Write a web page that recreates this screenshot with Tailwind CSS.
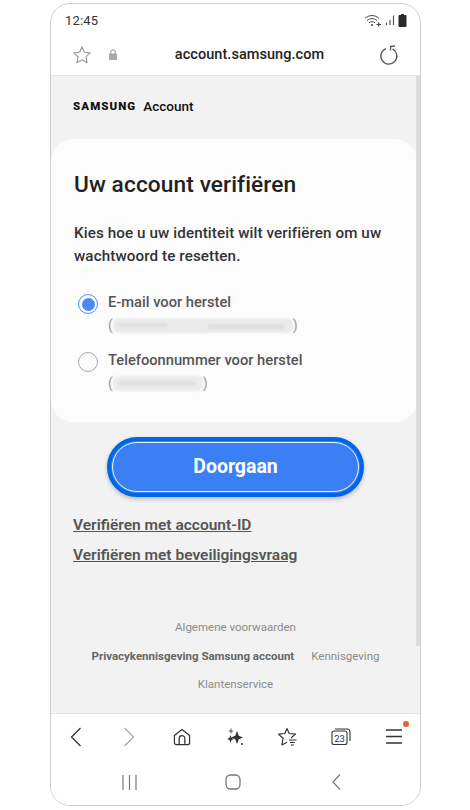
<!DOCTYPE html>
<html lang="en">
<head>
<meta charset="UTF-8">
<title>Samsung Account</title>
<script src="https://cdn.jsdelivr.net/npm/@tailwindcss/browser@4"></script>
</head>
<body class="bg-white w-[470px] h-[810px] overflow-hidden font-['Roboto',sans-serif]">
  <div class="ml-[50px] mt-[3px] w-[371px] h-[803px] border border-[#cfcfcf] rounded-[20px] overflow-hidden flex flex-col bg-white">
    <!-- status bar -->
    <div class="h-[31px] shrink-0 flex items-center justify-between pl-[14px] pr-[13px] pt-[3px]">
      <span class="text-[13px] text-[#333] tracking-[0.2px]">12:45</span>
      <div class="flex items-center gap-[2px] -mt-[2px]">
        <svg width="19" height="13" viewBox="0 0 19 13" fill="none" stroke="#444" stroke-width="1"><path d="M1 4.500C5 .6 11 .6 15 4.500"/><path d="M3 6.700C6 3.900 10 3.900 13 6.700"/><path d="M5 8.800C6.800 7.300 9.200 7.300 11 8.800"/><circle cx="8" cy="11" r="1" fill="#444" stroke="none"/><path d="M12.500 10.500H17M14.700 8.500V12.500" stroke-width="1.200"/></svg>
        <svg width="11" height="12" viewBox="0 0 11 12" stroke="#555" stroke-width="1.200"><path d="M1.500 11V8.500M5 11V6M8.500 11V1.500"/></svg>
        <svg width="9" height="13" viewBox="0 0 9 13" fill="#2b2b2b"><path d="M3 0h3v1h1.500a1 1 0 0 1 1 1v10a1 1 0 0 1-1 1h-6a1 1 0 0 1-1-1V2a1 1 0 0 1 1-1H3z"/></svg>
      </div>
    </div>
    <!-- url bar -->
    <div class="h-[41px] shrink-0 flex items-center pl-[21px] pr-[21px] pb-[1px] border-b border-[#e4e4e4]">
      <svg width="20" height="20" viewBox="0 0 22 22" fill="none" stroke="#9a9a9a" stroke-width="1.300" stroke-linejoin="round"><path d="M11 2l2.700 6 6.300.7-4.700 4.300 1.300 6.500L11 16.200 5.400 19.500 6.700 13 2 8.700 8.300 8z"/></svg>
      <svg class="ml-[16px]" width="10" height="13" viewBox="0 0 11 13"><path d="M3 6V4a2.500 2.500 0 0 1 5 0v2" fill="none" stroke="#a8a8a8" stroke-width="1.300"/><rect x="1" y="5.500" width="9" height="7" rx="1" fill="#a8a8a8"/></svg>
      <span class="flex-1 text-center text-[14.500px] font-medium text-[#222] tracking-[0.05px] pl-[2px]">account.samsung.com</span>
      <svg width="20" height="20" viewBox="0 0 20 20" fill="none" stroke="#555" stroke-width="1.300"><path d="M7 3.600A8 8 0 1 0 13.500 4"/><path d="M16 1L11.800 1.400 11.400 5.500"/></svg>
    </div>
    <!-- page -->
    <div class="relative flex-1 bg-[#f2f2f2] flex flex-col">
      <div class="absolute right-0 top-0 w-[4px] h-[570px] bg-[#dcdcdc]"></div>
      <div class="h-[63px] shrink-0 flex items-center pl-[22px] pb-[2px] gap-[7px] text-[#111]">
        <span class="text-[11.500px] font-black tracking-[1.050px]">SAMSUNG</span>
        <span class="text-[13.500px] font-medium">Account</span>
      </div>
      <section class="w-[366px] h-[283px] shrink-0 bg-[#fcfcfc] rounded-[22px] pl-[23px] pt-[31px]">
        <h1 class="text-[22.700px] leading-[30px] font-medium text-[#222] tracking-[0.1px]">Uw account verifiëren</h1>
        <p class="mt-[22px] text-[15.200px] leading-[23px] font-medium text-[#333] tracking-[0.1px]">Kies hoe u uw identiteit wilt verifiëren om uw<br>wachtwoord te resetten.</p>
        <div class="mt-[24px] flex flex-col gap-[16px]">
          <div class="flex gap-[10px] pl-[4px]">
            <span class="mt-[2px] w-[20px] h-[20px] rounded-full border border-[#4a8af5] flex items-center justify-center shrink-0"><span class="w-[13px] h-[13px] rounded-full bg-[#4a8af5]"></span></span>
            <div>
              <div class="text-[14.700px] leading-[20px] font-medium text-[#555]">E-mail voor herstel</div>
              <div class="mt-[4px] flex items-center h-[18px] text-[14px] text-[#999]">(<span class="relative w-[180px] h-[15px] rounded-[5px] bg-[#ebebeb] blur-[1px] overflow-hidden"><span class="absolute left-[4px] top-[5px] w-[50px] h-[4px] bg-[#e0e0e0]"></span><span class="absolute left-[95px] top-[6px] w-[76px] h-[5px] bg-[#dedede]"></span></span>)</div>
            </div>
          </div>
          <div class="flex gap-[10px] pl-[4px]">
            <span class="mt-[2px] w-[20px] h-[20px] rounded-full border border-[#a8a8a8] shrink-0"></span>
            <div>
              <div class="text-[14.700px] leading-[20px] font-medium text-[#555]">Telefoonnummer voor herstel</div>
              <div class="mt-[4px] flex items-center h-[18px] text-[14px] text-[#999]">(<span class="relative w-[90px] h-[15px] rounded-[5px] bg-[#ebebeb] blur-[1px] overflow-hidden"><span class="absolute left-[5px] top-[5px] w-[78px] h-[5px] bg-[#e0e0e0]"></span></span>)</div>
            </div>
          </div>
        </div>
      </section>
      <div class="mt-[15px] flex justify-center">
        <button class="w-[257px] h-[60px] rounded-full bg-[#3b7ff5] border-[4px] border-[#0066e6] text-white text-[19.500px] font-bold shadow-[0_2px_4px_rgba(0,0,0,0.25)] relative">
          <span class="absolute inset-[1px] rounded-full border border-white/90"></span>
          <span class="relative">Doorgaan</span>
        </button>
      </div>
      <div class="mt-[18px] pl-[22px] flex flex-col gap-[10px] text-[15.500px] leading-[20px] font-semibold text-[#555]">
        <a class="underline">Verifiëren met account-ID</a>
        <a class="underline">Verifiëren met beveiligingsvraag</a>
      </div>
      <div class="mt-[54px] flex flex-col items-center gap-[12.500px] text-[11.500px] leading-[16px] text-[#8a8a8a]">
        <span>Algemene voorwaarden</span>
        <div class="flex gap-[17px]"><span class="font-bold text-[#666]">Privacykennisgeving Samsung account</span><span>Kennisgeving</span></div>
        <span>Klantenservice</span>
      </div>
    </div>
    <!-- browser toolbar -->
    <div class="h-[92px] shrink-0 border-t border-[#e4e4e4] bg-white flex flex-col">
      <div class="h-[45px] grid grid-cols-7 items-center justify-items-center -ml-[2px]">
        <svg width="12" height="20" viewBox="0 0 12 20" fill="none" stroke="#333" stroke-width="1.300"><path d="M10.500 1L1.500 10l9 9"/></svg>
        <svg width="12" height="20" viewBox="0 0 12 20" fill="none" stroke="#aaa" stroke-width="1.300"><path d="M1.500 1l9 9-9 9"/></svg>
        <svg width="18" height="18" viewBox="0 0 19 19" fill="none" stroke="#333" stroke-width="1.300" stroke-linejoin="round"><path d="M1.500 8L9.500 1.500 17.500 8v7.500a2 2 0 0 1-2 2h-12a2 2 0 0 1-2-2z"/><path d="M6.500 17.500V11a3 3 0 0 1 6 0v6.500"/></svg>
        <svg width="18" height="18" viewBox="0 0 18 18" fill="#333"><path d="M11 3l1.800 4.700L17 9.500l-4.200 1.800L11 16l-1.800-4.700L5 9.500l4.200-1.800z"/><path d="M4.500 7l1.100 2.900L8 11l-2.400 1.100L4.500 15l-1.100-2.900L1 11l2.400-1.100z"/><circle cx="16" cy="16" r="1"/><path d="M5 .5v5M2.800 3h4.400" stroke="#333" stroke-width=".8"/></svg>
        <svg width="20" height="20" viewBox="0 0 20 20" fill="none" stroke="#333" stroke-width="1.200" stroke-linejoin="round"><path d="M9 1.500l2.200 5 6.300.6-4.500 3.900"/><path d="M9 1.500L6.800 6.500.5 7.100 5 11.300 3.900 18 9 15.200"/><path d="M11 13h7.500M12 15.500h5M13 18h3"/></svg>
        <svg width="20" height="19" viewBox="0 0 20 19" fill="none" stroke="#333" stroke-width="1.100"><rect x="1" y="4" width="15" height="13.500" rx="2"/><path d="M4 2h12a3 3 0 0 1 3 3v9"/><text x="8.500" y="15" text-anchor="middle" font-size="9.500" font-family="Roboto" fill="#333" stroke="none">23</text></svg>
        <div class="relative">
          <svg width="16" height="15" viewBox="0 0 16 15" fill="none" stroke="#333" stroke-width="1.300"><path d="M0 1h16M0 7.500h16M0 14h16"/></svg>
          <span class="absolute -top-[8px] -right-[7px] w-[6px] h-[6px] rounded-full bg-[#e8652a]"></span>
        </div>
      </div>
      <!-- nav bar -->
      <div class="flex-1 grid grid-cols-3 w-[310px] ml-[27px] items-center justify-items-center">
        <svg width="15" height="15" viewBox="0 0 15 15" stroke="#777" stroke-width="1.200"><path d="M1 0v15M7.500 0v15M14 0v15"/></svg>
        <svg width="16" height="16" viewBox="0 0 16 16" fill="none" stroke="#777" stroke-width="1.300"><rect x="1" y="1" width="14" height="14" rx="4.500"/></svg>
        <svg width="9" height="16" viewBox="0 0 9 16" fill="none" stroke="#777" stroke-width="1.200"><path d="M8 .5L1 8l7 7.500"/></svg>
      </div>
    </div>
  </div>
</body>
</html>
